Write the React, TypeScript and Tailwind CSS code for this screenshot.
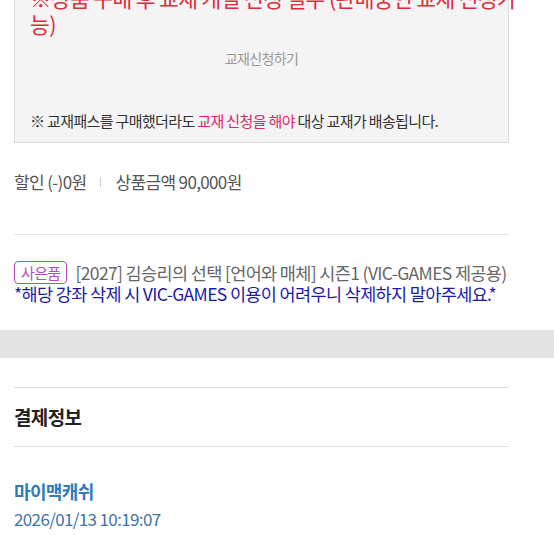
export default function App() {
  return (
    <div
      className="w-[554px] h-[554px] overflow-hidden bg-white text-[#333] tracking-[-0.04em]"
      style={{ fontFamily: '"Noto Sans CJK KR", "Noto Sans", sans-serif' }}
    >
      <div className="-mt-[40px] px-[14px] pr-[45px]">
        <div className="border border-[#dcdcdc] bg-[#f4f4f4] px-[15px] pt-[24px] pb-[10px]">
          <p className="whitespace-nowrap text-[21.5px] leading-[26px] text-[#e02b3a]">
            ※상품 구매 후 교재 개별 신청 필수 (판매중인 교재 신청가
            <br />
            능)
          </p>
          <div className="mt-[9px] text-center text-[14px] leading-[24px] text-[#999]">교재신청하기</div>
          <p className="mt-[40px] text-[15px] leading-[22px] text-[#333]">
            ※ 교재패스를 구매했더라도 <span className="text-[#e0256d]">교재 신청을 해야</span> 대상 교재가 배송됩니다.
          </p>
        </div>

        <div className="mt-[27px] flex items-center text-[17px] leading-[24px] text-[#555]">
          <span>할인 (-)0원</span>
          <span className="mx-[14px] h-[10px] w-px bg-[#ccc]" />
          <span>상품금액 90,000원</span>
        </div>

        <div className="mt-[40px] border-t border-[#e4e4e4]" />

        <div className="mt-[26px] flex items-center text-[17.5px] leading-[22px] text-[#666]">
          <span className="mr-[8px] rounded-[4px] border border-[#b54bbd] px-[6px] text-[15px] leading-[21px] text-[#b54bbd]">
            사은품
          </span>
          <span className="whitespace-nowrap">[2027] 김승리의 선택 [언어와 매체] 시즌1 (VIC-GAMES 제공용)</span>
        </div>
        <p className="whitespace-nowrap text-[17.5px] leading-[20px] text-[#1c1aa6]">
          *해당 강좌 삭제 시 VIC-GAMES 이용이 어려우니 삭제하지 말아주세요.*
        </p>
      </div>

      <div className="mt-[26px] h-[28px] bg-[#e4e4e4]" />

      <div className="px-[14px] pr-[45px]">
        <div className="mt-[29px] border-t border-[#dedede]" />
        <div className="py-[15px] text-[19px] font-bold leading-[28px] text-[#222]">결제정보</div>
        <div className="border-t border-[#dedede]" />
        <div className="mt-[32px] text-[18px] font-bold leading-[24px] text-[#2f7bb5]">마이맥캐쉬</div>
        <div className="mt-[4px] text-[17px] leading-[24px] text-[#3d74a6]">2026/01/13 10:19:07</div>
      </div>
    </div>
  )
}
